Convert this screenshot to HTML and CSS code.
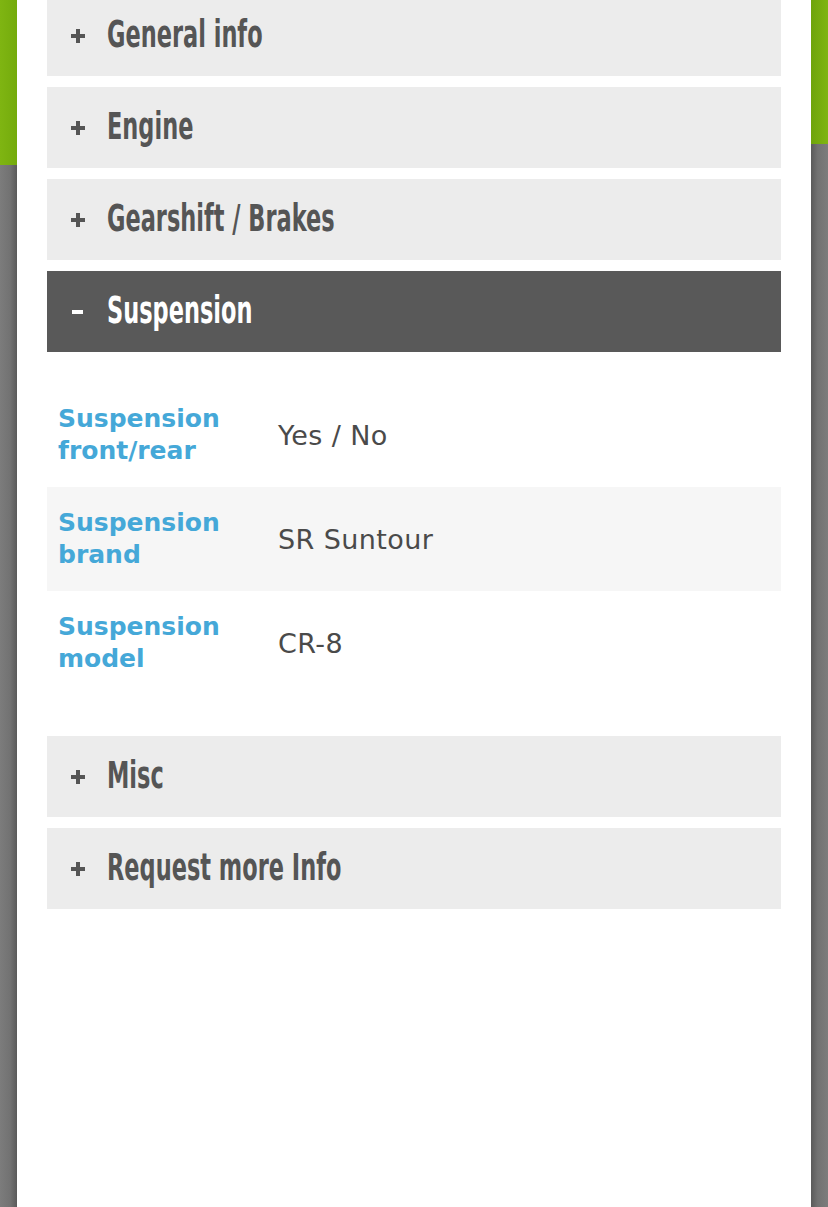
FILE: index.html
```html
<!DOCTYPE html>
<html>
<head>
<meta charset="utf-8">
<link rel="stylesheet" href="styles.css">
</head>
<body>
<div class="page">
  <div class="strip strip-left"></div>
  <main class="panel">
    <div class="acc">
      <div class="acc-head"><span class="sign plus"></span><span class="acc-title">General info</span></div>
      <div class="acc-head"><span class="sign plus"></span><span class="acc-title">Engine</span></div>
      <div class="acc-head"><span class="sign plus"></span><span class="acc-title">Gearshift / Brakes</span></div>
      <div class="acc-head open"><span class="sign minus"></span><span class="acc-title">Suspension</span></div>
      <div class="acc-body">
        <div class="spec-row">
          <div class="spec-label">Suspension<br>front/rear</div>
          <div class="spec-value">Yes / No</div>
        </div>
        <div class="spec-row alt">
          <div class="spec-label">Suspension<br>brand</div>
          <div class="spec-value">SR Suntour</div>
        </div>
        <div class="spec-row">
          <div class="spec-label">Suspension<br>model</div>
          <div class="spec-value">CR-8</div>
        </div>
      </div>
      <div class="acc-head"><span class="sign plus"></span><span class="acc-title">Misc</span></div>
      <div class="acc-head"><span class="sign plus"></span><span class="acc-title">Request more Info</span></div>
    </div>
  </main>
  <div class="strip strip-right"></div>
</div>
</body>
</html>
```

FILE: styles.css
```css
html, body {
  margin: 0;
  padding: 0;
  height: 100%;
  overflow: hidden;
}
.page {
  display: flex;
  height: 1207px;
  width: 828px;
}
.strip {
  width: 17px;
  flex: none;
}
.strip-left {
  background:
    linear-gradient(to right, #7fb512, #74ab0c) 0 0 / 100% 165px no-repeat,
    linear-gradient(to right, #7c7c7c 0%, #727272 60%, #5a5a5a 100%);
}
.strip-right {
  background:
    linear-gradient(to right, #6ea40a, #7fb512) 0 0 / 100% 144px no-repeat,
    linear-gradient(to right, #5a5a5a 0%, #727272 40%, #7c7c7c 100%);
}
.panel {
  flex: 1;
  background: #ffffff;
  padding: 0 30px;
}
.acc {
  margin-top: -5px;
  display: flex;
  flex-direction: column;
}
.acc-head {
  height: 81px;
  margin-bottom: 11px;
  background: #ececec;
  display: flex;
  align-items: center;
  padding-left: 24px;
  color: #555555;
}
.acc-head.open {
  background: #595959;
  color: #ffffff;
  margin-bottom: 0;
}
.sign {
  position: relative;
  width: 14px;
  height: 14px;
  margin-right: 22px;
  flex: none;
}
.sign::before, .sign::after {
  content: "";
  position: absolute;
  background: currentColor;
}
.sign::before {
  left: 0;
  top: 5px;
  width: 14px;
  height: 4px;
}
.plus::after {
  left: 5px;
  top: 0;
  width: 4px;
  height: 14px;
}
.minus::before {
  left: 1px;
  width: 11px;
}
.acc-title {
  display: inline-block;
  font-family: "DejaVu Sans Condensed", sans-serif;
  font-weight: bold;
  font-size: 37px;
  line-height: 1;
  white-space: nowrap;
  transform: scaleX(0.675);
  transform-origin: left center;
  margin-top: -2px;
}
.acc-body {
  padding: 31px 0 41px;
}
.spec-row {
  height: 104px;
  display: flex;
  align-items: center;
  padding-left: 11px;
}
.spec-row.alt {
  background: #f6f6f6;
}
.spec-label {
  width: 220px;
  flex: none;
  font-family: "DejaVu Sans", sans-serif;
  font-weight: bold;
  font-size: 25px;
  line-height: 32px;
  color: #45a8d8;
}
.spec-value {
  font-family: "DejaVu Sans", sans-serif;
  font-size: 27px;
  letter-spacing: 0.4px;
  color: #4a4a4a;
}
```
